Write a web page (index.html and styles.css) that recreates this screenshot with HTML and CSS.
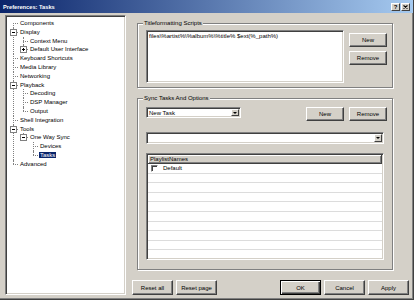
FILE: index.html
```html
<!DOCTYPE html>
<html lang="en">
<head>
    <meta charset="UTF-8">
    <title>Preferences: Tasks</title>
    <link rel="stylesheet" href="styles.css">
</head>
<body>
    <div class="window">
        <!-- Title bar -->
        <div class="titlebar">
            <span class="title">Preferences: Tasks</span>
            <div class="caption-buttons">
                <span class="cap-btn">?</span>
                <span class="cap-btn">
                    <svg width="5" height="4" viewBox="0 0 5 4"><path d="M0.5 0.5L4.5 3.5M4.5 0.5L0.5 3.5" stroke="#000" stroke-width="1.1"/></svg>
                </span>
            </div>
        </div>

        <div class="client">
            <!-- Page tree -->
            <div class="tree">
                <ul class="tree-root">
                    <li><span class="node"><span class="label">Components</span></span></li>
                    <li>
                        <span class="toggle"><svg width="7" height="7"><rect x="0.5" y="0.5" width="6" height="6" fill="#fff" stroke="#808080"/><path d="M2 3.5h3" stroke="#000"/></svg></span>
                        <span class="node"><span class="label">Display</span></span>
                        <ul>
                            <li><span class="node"><span class="label">Context Menu</span></span></li>
                            <li>
                                <span class="toggle"><svg width="7" height="7"><rect x="0.5" y="0.5" width="6" height="6" fill="#fff" stroke="#808080"/><path d="M2 3.5h3M3.5 2v3" stroke="#000"/></svg></span>
                                <span class="node"><span class="label">Default User Interface</span></span>
                            </li>
                        </ul>
                    </li>
                    <li><span class="node"><span class="label">Keyboard Shortcuts</span></span></li>
                    <li><span class="node"><span class="label">Media Library</span></span></li>
                    <li><span class="node"><span class="label">Networking</span></span></li>
                    <li>
                        <span class="toggle"><svg width="7" height="7"><rect x="0.5" y="0.5" width="6" height="6" fill="#fff" stroke="#808080"/><path d="M2 3.5h3" stroke="#000"/></svg></span>
                        <span class="node"><span class="label">Playback</span></span>
                        <ul>
                            <li><span class="node"><span class="label">Decoding</span></span></li>
                            <li><span class="node"><span class="label">DSP Manager</span></span></li>
                            <li><span class="node"><span class="label">Output</span></span></li>
                        </ul>
                    </li>
                    <li><span class="node"><span class="label">Shell Integration</span></span></li>
                    <li>
                        <span class="toggle"><svg width="7" height="7"><rect x="0.5" y="0.5" width="6" height="6" fill="#fff" stroke="#808080"/><path d="M2 3.5h3" stroke="#000"/></svg></span>
                        <span class="node"><span class="label">Tools</span></span>
                        <ul>
                            <li>
                                <span class="toggle"><svg width="7" height="7"><rect x="0.5" y="0.5" width="6" height="6" fill="#fff" stroke="#808080"/><path d="M2 3.5h3" stroke="#000"/></svg></span>
                                <span class="node"><span class="label">One Way Sync</span></span>
                                <ul>
                                    <li><span class="node"><span class="label">Devices</span></span></li>
                                    <li><span class="node"><span class="label selected">Tasks</span></span></li>
                                </ul>
                            </li>
                        </ul>
                    </li>
                    <li><span class="node"><span class="label">Advanced</span></span></li>
                </ul>
            </div>

            <!-- Page content -->
            <div class="panel">
                <div class="group scripts">
                    <span class="group-label">Titleformatting Scripts</span>
                    <div class="textbox script-box">files\%artist%\%album%\%title% $ext(%_path%)</div>
                    <div class="side-buttons">
                        <button class="btn">New</button>
                        <button class="btn">Remove</button>
                    </div>
                </div>

                <div class="group sync">
                    <span class="group-label">Sync Tasks And Options</span>
                    <div class="task-row">
                        <div class="combo task-combo">
                            <span class="combo-text">New Task</span>
                            <span class="combo-arrow"><span class="arrow"></span></span>
                        </div>
                        <div class="row-buttons">
                            <button class="btn">New</button>
                            <button class="btn">Remove</button>
                        </div>
                    </div>
                    <div class="combo wide-combo">
                        <span class="combo-text"></span>
                        <span class="combo-arrow"><span class="arrow"></span></span>
                    </div>
                    <div class="listview">
                        <div class="list-header">PlaylistNames</div>
                        <div class="list-row"><span class="checkbox"></span>Default</div>
                        <div class="list-row"></div>
                        <div class="list-row"></div>
                        <div class="list-row"></div>
                        <div class="list-row"></div>
                        <div class="list-row"></div>
                        <div class="list-row"></div>
                        <div class="list-row"></div>
                        <div class="list-row"></div>
                        <div class="list-row"></div>
                    </div>
                </div>

                <div class="dialog-buttons">
                    <div class="btn-group">
                        <button class="btn wide">Reset all</button>
                        <button class="btn wide">Reset page</button>
                    </div>
                    <div class="btn-group">
                        <button class="btn wide default">OK</button>
                        <button class="btn wide">Cancel</button>
                        <button class="btn wide">Apply</button>
                    </div>
                </div>
            </div>
        </div>
    </div>
</body>
</html>
```

FILE: styles.css
```css
/* General Styles */
body {
    margin: 0;
    padding: 0;
    background-color: #D4D0C8;
    font-family: 'Liberation Sans', Arial, sans-serif;
    font-size: 6px;
    color: #000000;
    overflow: hidden;
}
.window {
    width: 414px;
    height: 300px;
    box-sizing: border-box;
    border-right: 1px solid #404040;
    border-bottom: 1px solid #404040;
    box-shadow: inset -1px -1px #808080;
}
/* Title Bar */
.titlebar {
    height: 13px;
    display: flex;
    align-items: center;
    justify-content: space-between;
    padding: 0 3px 0 3px;
    background: linear-gradient(to right, #0A246A, #A6CAF0);
}
.titlebar .title {
    color: #ffffff;
    font-weight: bold;
    font-size: 5.7px;
}
.caption-buttons {
    display: flex;
    gap: 1px;
}
.cap-btn {
    width: 9px;
    height: 8px;
    box-sizing: border-box;
    display: flex;
    align-items: center;
    justify-content: center;
    background: #D4D0C8;
    border: 1px solid;
    border-color: #ffffff #404040 #404040 #ffffff;
    font-weight: bold;
    font-size: 6px;
    line-height: 6px;
}
/* Client Area */
.client {
    display: flex;
    padding: 2px 0 0 5px;
}
/* Tree */
.tree {
    width: 121px;
    height: 280px;
    box-sizing: border-box;
    background: #ffffff;
    border: 1px solid;
    border-color: #808080 #ffffff #ffffff #808080;
    box-shadow: inset 1px 1px #404040, inset -1px -1px #D4D0C8;
    padding: 3px 0 0 1px;
    overflow: hidden;
}
.tree ul {
    list-style: none;
    margin: 0;
    padding: 0;
}
.tree ul ul {
    padding-left: 10px;
}
.tree li {
    position: relative;
}
.tree li::before {
    content: "";
    position: absolute;
    left: 6px;
    top: 4px;
    width: 5px;
    border-top: 1px dotted #808080;
}
.tree li::after {
    content: "";
    position: absolute;
    left: 6px;
    top: 0;
    bottom: 0;
    border-left: 1px dotted #808080;
}
.tree li:last-child::after {
    bottom: auto;
    height: 4px;
}
.tree-root > li:first-child::after {
    top: 4px;
}
.tree .node {
    display: block;
    height: 8.8px;
    line-height: 8.8px;
    padding-left: 12px;
    white-space: nowrap;
}
.tree .label {
    padding: 0 1px;
}
.tree .selected {
    background: #0A246A;
    color: #ffffff;
}
.tree .toggle {
    position: absolute;
    left: 3px;
    top: 1px;
    z-index: 1;
    width: 7px;
    height: 7px;
    display: block;
}
.tree .toggle svg {
    display: block;
}
/* Panel */
.panel {
    width: 277px;
    margin-left: 6px;
    display: flex;
    flex-direction: column;
}
.group {
    position: relative;
    box-sizing: border-box;
    margin-left: 5px;
    width: 256px;
    border: 1px solid #808080;
    box-shadow: inset 1px 1px #ffffff, 1px 1px #ffffff;
}
.group-label {
    position: absolute;
    top: -4px;
    left: 5px;
    padding: 0 1px;
    line-height: 7px;
    background: #D4D0C8;
}
.scripts {
    margin-top: 8px;
    height: 65px;
    display: flex;
    padding: 6px 0 0 8px;
}
.textbox {
    box-sizing: border-box;
    background: #ffffff;
    border: 1px solid;
    border-color: #808080 #ffffff #ffffff #808080;
    box-shadow: inset 1px 1px #404040, inset -1px -1px #D4D0C8;
}
.script-box {
    width: 198px;
    height: 53px;
    padding: 2px 2px;
    line-height: 7px;
}
.side-buttons {
    display: flex;
    flex-direction: column;
    gap: 4px;
    margin: 3px 0 0 5px;
}
/* Buttons */
.btn {
    box-sizing: border-box;
    width: 38px;
    height: 14px;
    padding: 0;
    background: #D4D0C8;
    border: 1px solid;
    border-color: #ffffff #404040 #404040 #ffffff;
    box-shadow: inset -1px -1px #808080;
    font-family: 'Liberation Sans', Arial, sans-serif;
    font-size: 6px;
    color: #000000;
}
.btn.wide {
    width: 41px;
    height: 15px;
}
.btn.default {
    border: 1px solid #000000;
    box-shadow: inset 1px 1px #ffffff, inset -1px -1px #404040, inset -2px -2px #808080;
}
/* Sync group */
.sync {
    margin-top: 10px;
    height: 172px;
    padding: 8px 5px 0 8px;
}
.task-row {
    display: flex;
    justify-content: space-between;
    align-items: flex-start;
}
.row-buttons {
    display: flex;
    gap: 5px;
}
.combo {
    display: flex;
    box-sizing: border-box;
    background: #ffffff;
    border: 1px solid;
    border-color: #808080 #ffffff #ffffff #808080;
    box-shadow: inset 1px 1px #404040, inset -1px -1px #D4D0C8;
    padding: 1px 1px 1px 2px;
}
.combo-text {
    flex: 1;
    line-height: 9px;
    white-space: nowrap;
}
.combo-arrow {
    width: 8px;
    box-sizing: border-box;
    display: flex;
    align-items: center;
    justify-content: center;
    background: #D4D0C8;
    border: 1px solid;
    border-color: #ffffff #404040 #404040 #ffffff;
}
.arrow {
    width: 0;
    height: 0;
    border-left: 2px solid transparent;
    border-right: 2px solid transparent;
    border-top: 2px solid #000000;
}
.task-combo {
    width: 95px;
    height: 11px;
}
.wide-combo {
    width: 238px;
    height: 12px;
    margin-top: 11px;
}
/* List view */
.listview {
    width: 238px;
    height: 107px;
    margin-top: 9px;
    box-sizing: border-box;
    background: #ffffff;
    border: 1px solid;
    border-color: #808080 #ffffff #ffffff #808080;
    box-shadow: inset 1px 1px #404040, inset -1px -1px #D4D0C8;
    padding: 1px;
    overflow: hidden;
}
.list-header {
    height: 9px;
    box-sizing: border-box;
    line-height: 8px;
    padding-left: 2px;
    background: #D4D0C8;
    border-right: 1px solid #404040;
    border-bottom: 1px solid #404040;
    box-shadow: inset 1px 1px #ffffff, inset -1px -1px #808080;
}
.list-row {
    height: 9.6px;
    box-sizing: border-box;
    display: flex;
    align-items: center;
    padding-left: 3px;
    border-bottom: 1px solid #dcdcdc;
}
.checkbox {
    width: 7px;
    height: 7px;
    box-sizing: border-box;
    margin-right: 5px;
    background: #ffffff;
    border: 1px solid;
    border-color: #808080 #ffffff #ffffff #808080;
    box-shadow: inset 1px 1px #404040;
}
/* Dialog buttons */
.dialog-buttons {
    display: flex;
    justify-content: space-between;
    margin-top: 10px;
}
.btn-group {
    display: flex;
    gap: 3px;
}
```
